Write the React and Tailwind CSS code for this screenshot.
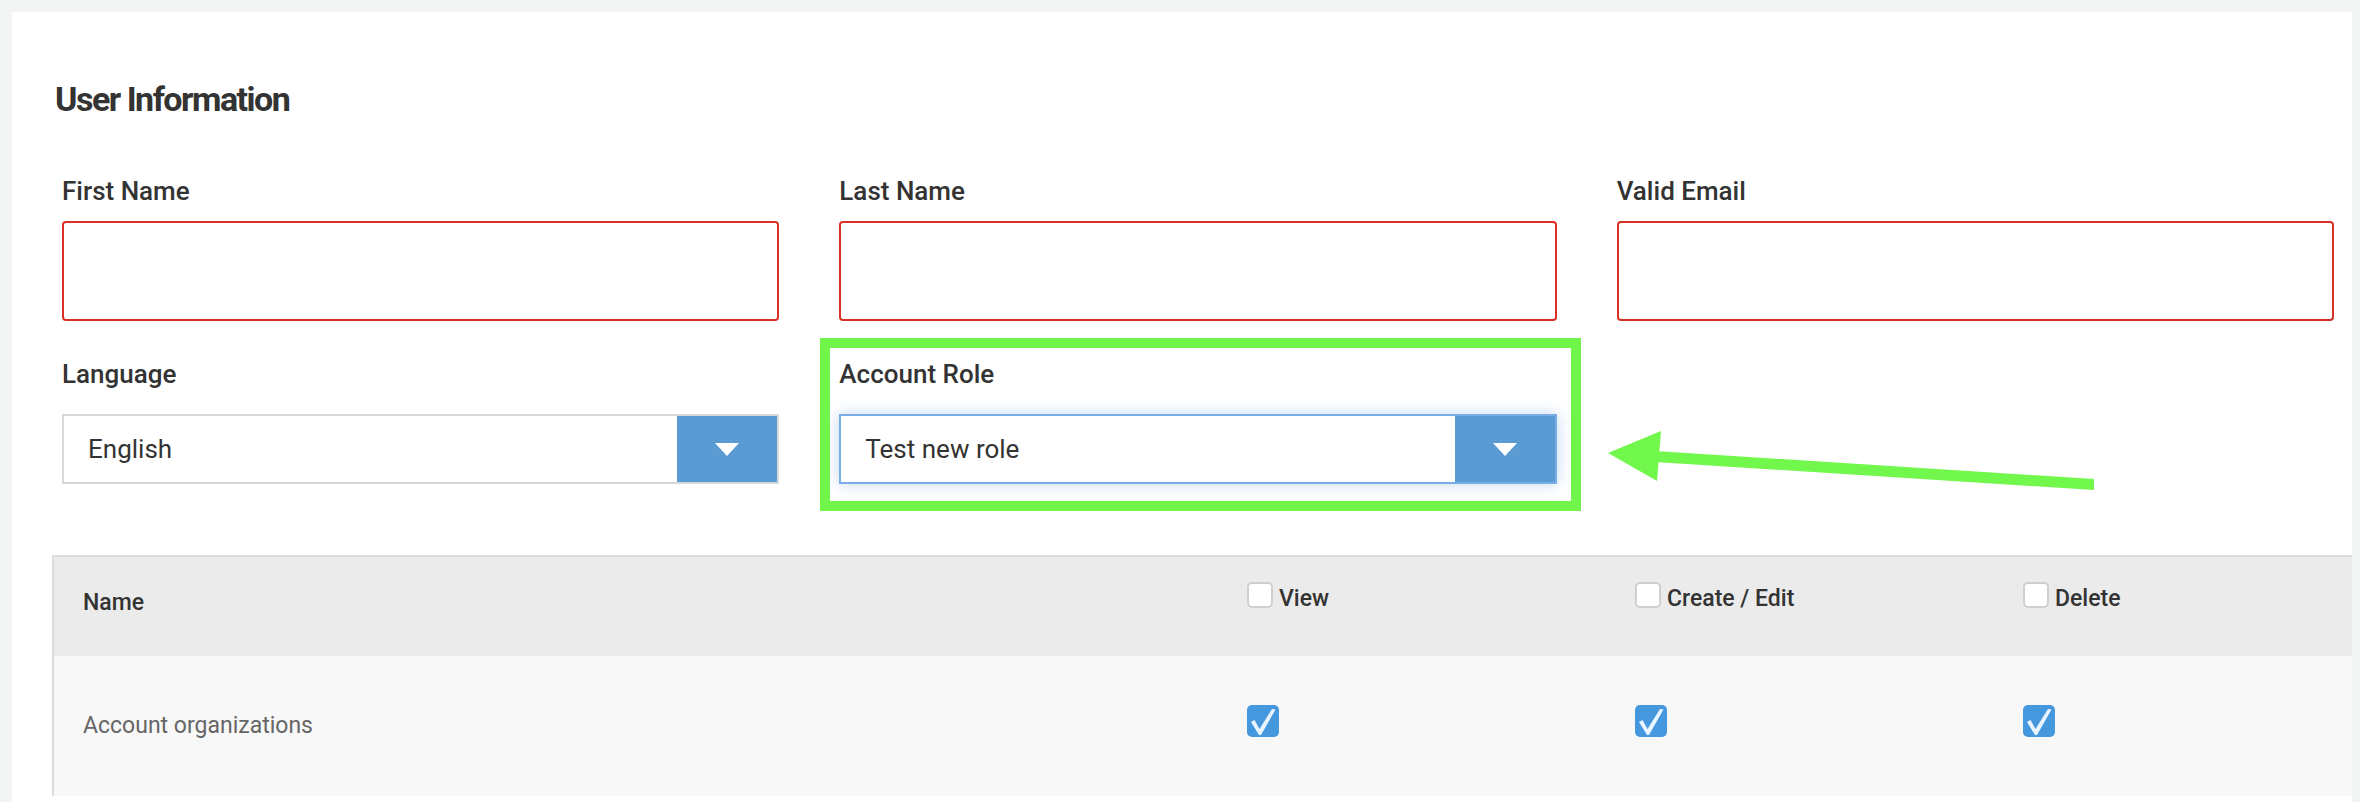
import React from 'react';

const font = { fontFamily: 'Roboto, "Noto Sans", sans-serif' };

function Field({ label, children }) {
  return (
    <div className="flex flex-col">
      <label className="text-[26px] leading-[26px] font-medium text-[#333] mb-[17px]">{label}</label>
      {children}
    </div>
  );
}

function TextInput() {
  return <div className="h-[100px] border-2 border-[#d93025] rounded-[4px] bg-white" />;
}

function Caret() {
  return (
    <svg width="24" height="13" viewBox="0 0 24 13">
      <polygon points="0,0 24,0 12,13" fill="#ffffff" />
    </svg>
  );
}

function Select({ value, focused }) {
  return (
    <div
      className={
        'mt-[10px] h-[70px] flex items-stretch bg-white border-2 ' +
        (focused
          ? 'border-[#79ade6] shadow-[0_0_14px_rgba(82,140,220,0.35)]'
          : 'border-[#d8d8d8]')
      }
    >
      <div className="flex-1 flex items-center pl-[24px] text-[26px] text-[#333]">{value}</div>
      <div className="w-[100px] bg-[#5b9bd3] flex items-center justify-center">
        <Caret />
      </div>
    </div>
  );
}

function EmptyBox() {
  return <span className="w-[26px] h-[26px] rounded-[5px] border-2 border-[#cfcfcf] bg-white shrink-0" />;
}

function CheckedBox() {
  return (
    <span className="w-[32px] h-[32px] rounded-[5px] bg-[#4597de] flex items-center justify-center mb-[10px]">
      <svg width="32" height="32" viewBox="0 0 32 32">
        <path d="M4 17 L7.5 15 L12.5 24 L25 4 L28.5 4.5 L14 30 L12 30 Z" fill="#e9f5ff" />
      </svg>
    </span>
  );
}

function HeadCheck({ label }) {
  return (
    <div className="flex items-start gap-[6px] pt-[25px] pl-[29px]">
      <EmptyBox />
      <span className="mt-[5px] text-[23px] leading-[23px] font-medium text-[#333]">{label}</span>
    </div>
  );
}

export default function App() {
  return (
    <div className="relative min-h-screen bg-[#f3f4f4] pl-[12px] pr-[8px] pt-[12px] overflow-hidden" style={font}>
      <div className="bg-white h-[800px]">
        <h2 className="pt-[70px] pl-[43px] text-[34px] leading-[34px] font-bold text-[#333] tracking-[-1.5px]">
          User Information
        </h2>

        <div className="mt-[62px] pl-[50px] pr-[18px] grid grid-cols-3 gap-x-[60px] gap-y-[40px]">
          <Field label="First Name">
            <TextInput />
          </Field>
          <Field label="Last Name">
            <TextInput />
          </Field>
          <Field label="Valid Email">
            <TextInput />
          </Field>
          <Field label="Language">
            <Select value="English" />
          </Field>
          <div className="relative">
            <Field label="Account Role">
              <Select value="Test new role" focused />
            </Field>
            <div className="absolute -left-[19px] -top-[23px] -right-[24px] -bottom-[27px] border-[10px] border-[#70f54b] pointer-events-none" />
          </div>
          <div />
        </div>

        <div className="ml-[40px] mt-[71px] border-t-2 border-l-2 border-[#dcdcdc]">
          <div className="grid grid-cols-[1164px_388px_388px_1fr] h-[99px] bg-[#ebebeb]">
            <div className="pl-[29px] pt-[34px] text-[23px] leading-[23px] font-medium text-[#333]">Name</div>
            <HeadCheck label="View" />
            <HeadCheck label="Create / Edit" />
            <HeadCheck label="Delete" />
          </div>
          <div className="grid grid-cols-[1164px_388px_388px_1fr] h-[140px] bg-[#f8f8f8] items-center">
            <div className="pl-[29px] text-[23px] text-[#666]">Account organizations</div>
            <div className="pl-[29px]"><CheckedBox /></div>
            <div className="pl-[29px]"><CheckedBox /></div>
            <div className="pl-[29px]"><CheckedBox /></div>
          </div>
        </div>
      </div>

      <svg className="absolute left-0 top-0 pointer-events-none" width="2360" height="802" viewBox="0 0 2360 802">
        <polygon points="1655,451 2094,479 2094,490 1655,462" fill="#72f74d" />
        <polygon points="1608,453 1661,431 1657,481" fill="#72f74d" />
      </svg>
    </div>
  );
}
